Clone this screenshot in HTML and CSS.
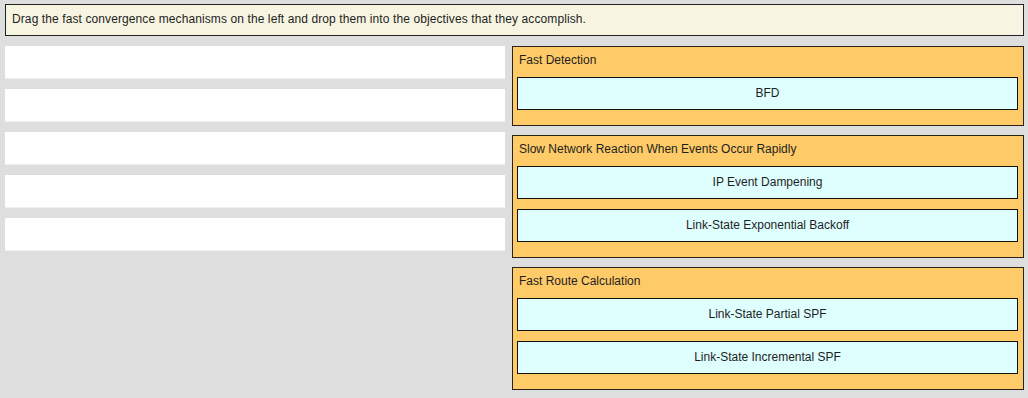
FILE: index.html
```html
<!DOCTYPE html>
<html lang="en">
<head>
  <meta charset="UTF-8" />
  <title>Drag and Drop - Fast Convergence</title>
  <link rel="stylesheet" href="styles.css">
</head>
<body>
  <div class="question">Drag the fast convergence mechanisms on the left and drop them into the objectives that they accomplish.</div>

  <div class="board">
    <div class="sources">
      <div class="slot"></div>
      <div class="slot"></div>
      <div class="slot"></div>
      <div class="slot"></div>
      <div class="slot"></div>
    </div>

    <div class="targets">
      <div class="group">
        <div class="group-title">Fast Detection</div>
        <div class="item">BFD</div>
      </div>
      <div class="group">
        <div class="group-title">Slow Network Reaction When Events Occur Rapidly</div>
        <div class="item">IP Event Dampening</div>
        <div class="item">Link-State Exponential Backoff</div>
      </div>
      <div class="group">
        <div class="group-title">Fast Route Calculation</div>
        <div class="item">Link-State Partial SPF</div>
        <div class="item">Link-State Incremental SPF</div>
      </div>
    </div>
  </div>
</body>
</html>
```

FILE: styles.css
```css
body {
  margin: 0;
  padding: 4px 4px 0 5px;
  background: #dedede;
  font-family: "Liberation Sans", Arial, sans-serif;
  color: #1e1e1e;
}

.question {
  height: 30px;
  line-height: 29px;
  padding-left: 6px;
  border: 1px solid #222;
  background: #f7f5e2;
  font-size: 12px;
  letter-spacing: 0.1px;
}

.board {
  display: flex;
  gap: 7px;
  margin-top: 10px;
}

.sources {
  width: 500px;
  display: flex;
  flex-direction: column;
  gap: 10px;
}

.slot {
  height: 33px;
  background: #fff;
  box-shadow: inset 0 -1px 0 #f0f0f0;
}

.targets {
  width: 512px;
  display: flex;
  flex-direction: column;
  gap: 9px;
}

.group {
  background: #ffcb69;
  border: 1px solid #2a2418;
  padding: 0 5px 15px 4px;
  display: flex;
  flex-direction: column;
  gap: 10px;
}

.group-title {
  font-size: 12px;
  line-height: 14px;
  padding: 6px 0 0 2px;
  height: 14px;
}

.item {
  height: 31px;
  line-height: 30px;
  border: 1px solid #111;
  background: #dfffff;
  text-align: center;
  font-size: 12px;
}
```
